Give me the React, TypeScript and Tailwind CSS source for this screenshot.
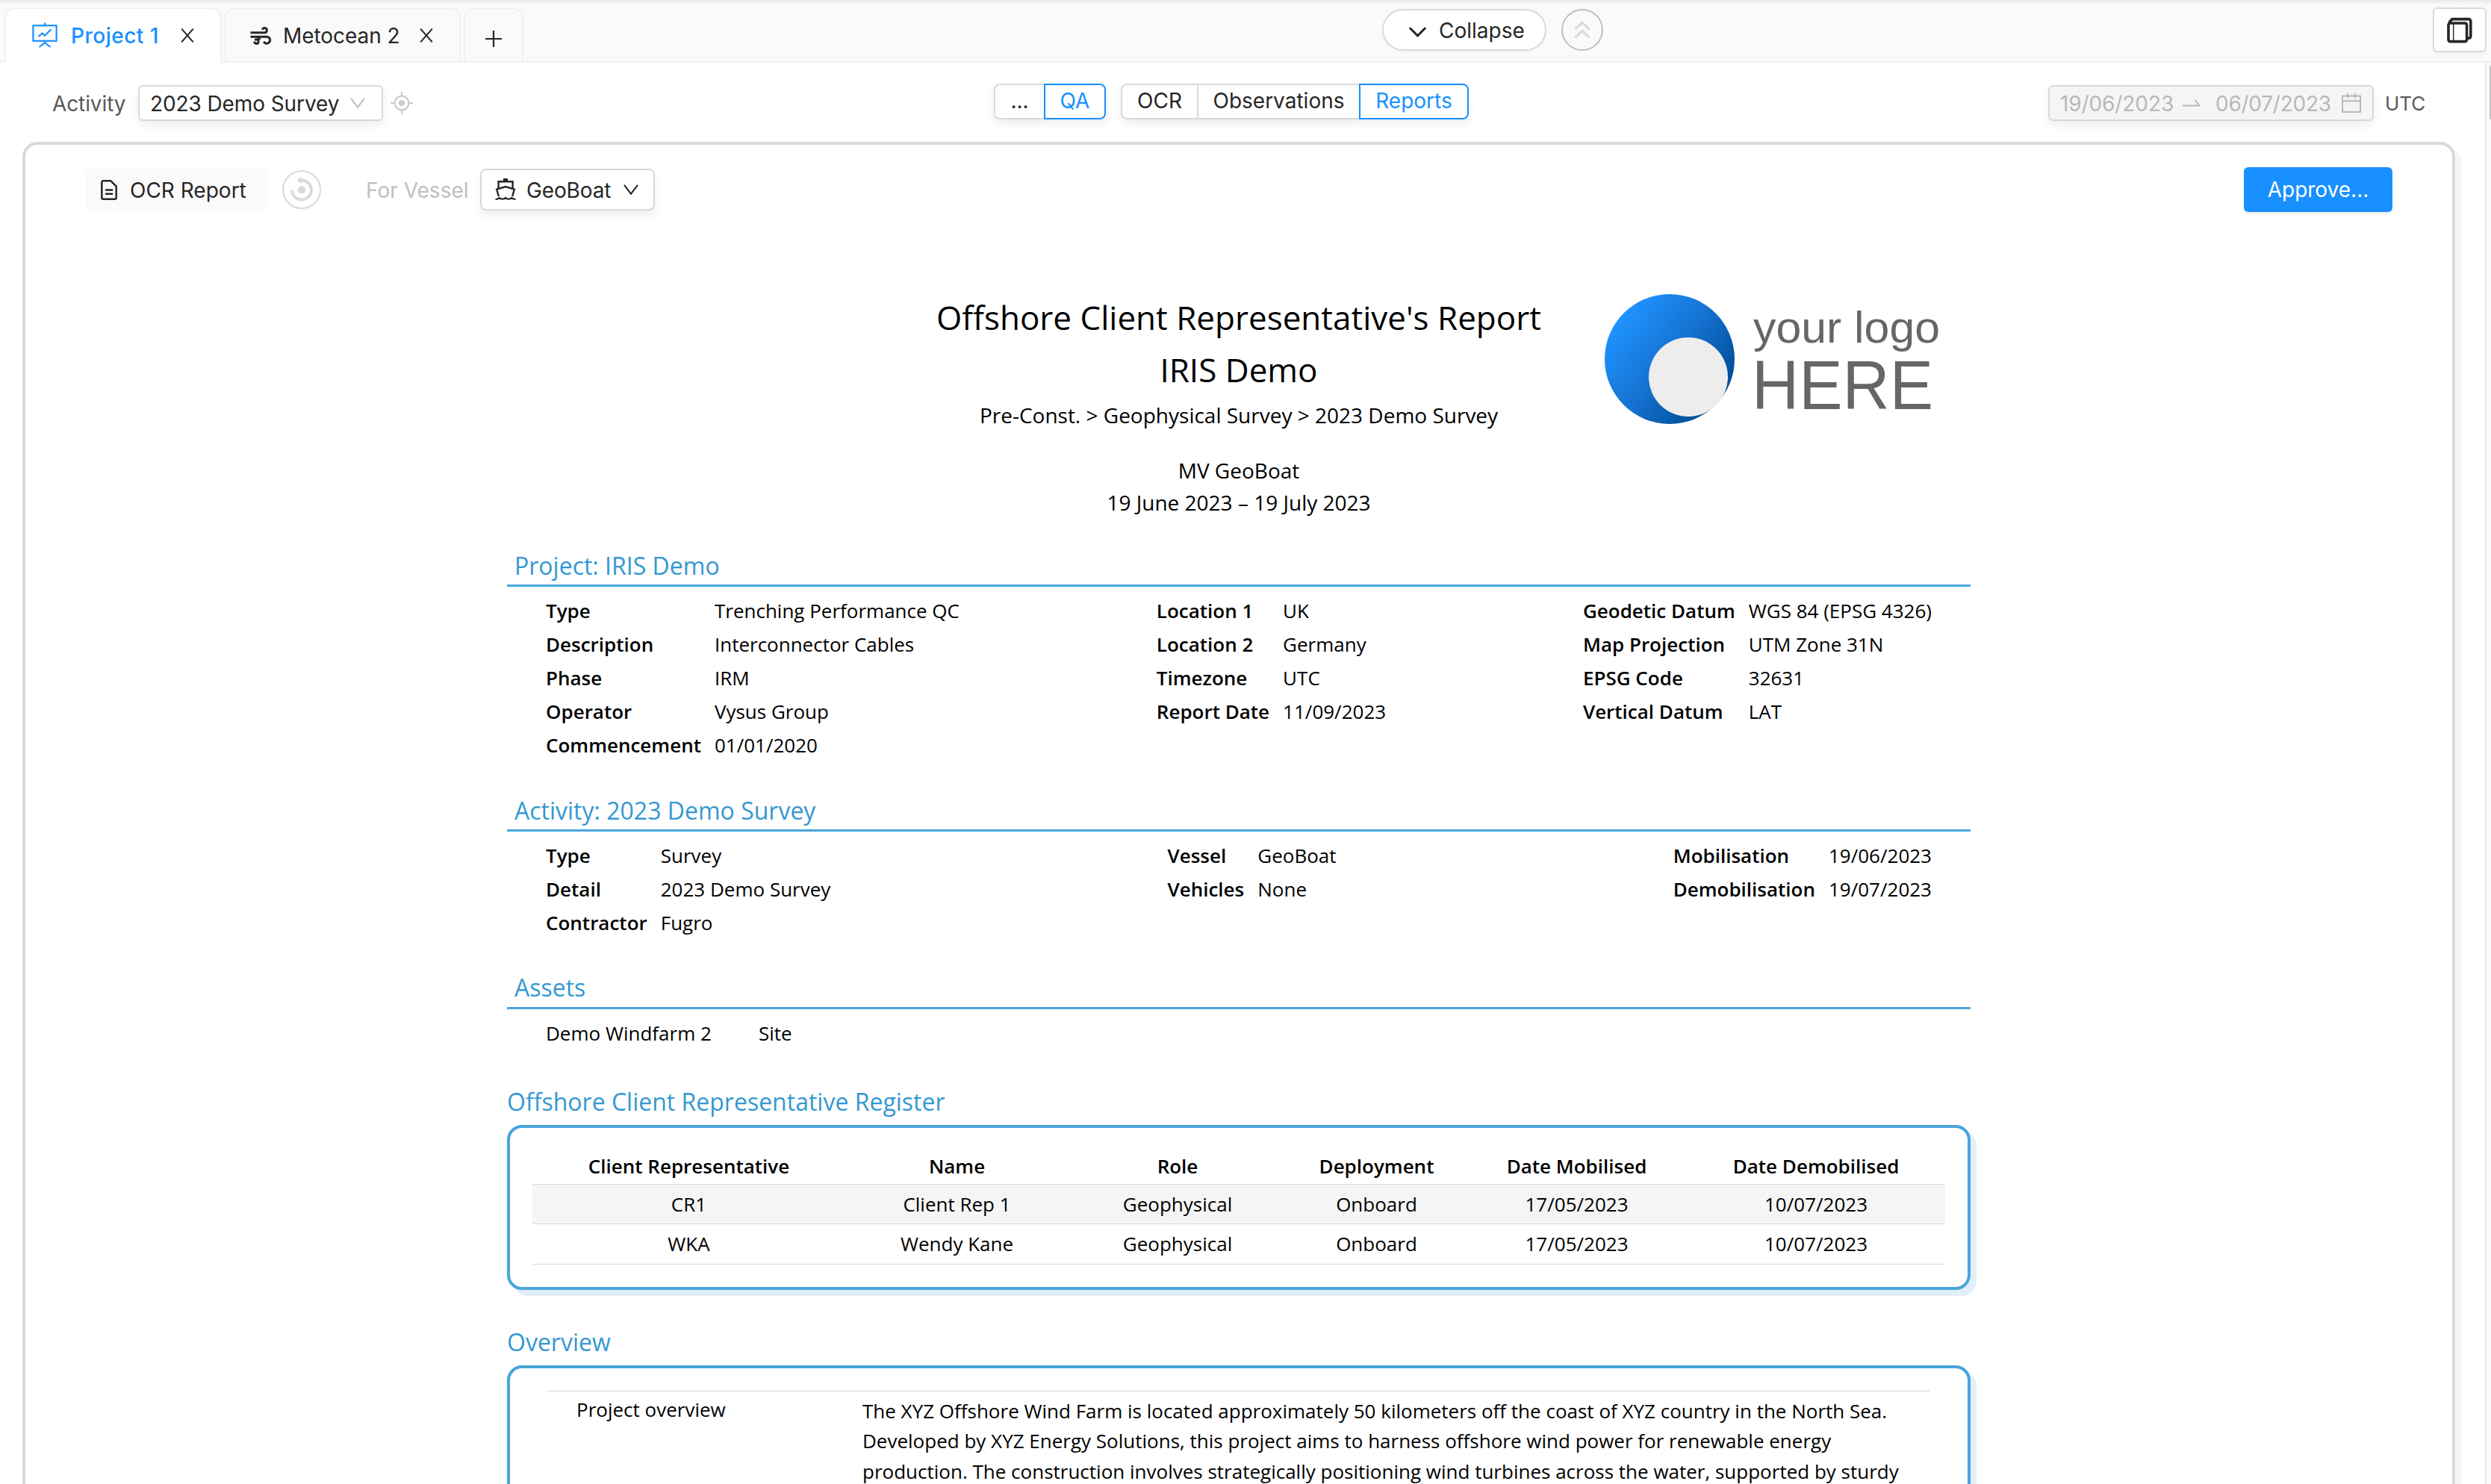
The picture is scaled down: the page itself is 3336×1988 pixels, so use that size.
// OCR report page - tab bar, activity toolbar and the printable report
import React from 'react';

type Field = [label: string, value: string];

interface FieldSectionProps {
  title: string;
  columns: Field[][];
}

const projectColumns: Field[][] = [
  [
    ['Type', 'Trenching Performance QC'],
    ['Description', 'Interconnector Cables'],
    ['Phase', 'IRM'],
    ['Operator', 'Vysus Group'],
    ['Commencement', '01/01/2020'],
  ],
  [
    ['Location 1', 'UK'],
    ['Location 2', 'Germany'],
    ['Timezone', 'UTC'],
    ['Report Date', '11/09/2023'],
  ],
  [
    ['Geodetic Datum', 'WGS 84 (EPSG 4326)'],
    ['Map Projection', 'UTM Zone 31N'],
    ['EPSG Code', '32631'],
    ['Vertical Datum', 'LAT'],
  ],
];

const activityColumns: Field[][] = [
  [
    ['Type', 'Survey'],
    ['Detail', '2023 Demo Survey'],
    ['Contractor', 'Fugro'],
  ],
  [
    ['Vessel', 'GeoBoat'],
    ['Vehicles', 'None'],
  ],
  [
    ['Mobilisation', '19/06/2023'],
    ['Demobilisation', '19/07/2023'],
  ],
];

const registerHeaders = [
  'Client Representative',
  'Name',
  'Role',
  'Deployment',
  'Date Mobilised',
  'Date Demobilised',
];

const registerRows = [
  ['CR1', 'Client Rep 1', 'Geophysical', 'Onboard', '17/05/2023', '10/07/2023'],
  ['WKA', 'Wendy Kane', 'Geophysical', 'Onboard', '17/05/2023', '10/07/2023'],
];

// Icons

function ProjectIcon() {
  return (
    <svg width="34" height="34" viewBox="0 0 34 34" fill="none" stroke="currentColor" strokeWidth="2.2">
      <rect x="1.4" y="4.2" width="31.2" height="20.6" />
      <path d="M17 0.5V4.5M17 25v3M9.5 33l7.5-5.8 7.5 5.8" />
      <path d="M8.5 19l5-4.6 3.4 3.4L25.5 9.2" />
    </svg>
  );
}

function WindIcon() {
  return (
    <svg width="29" height="26" viewBox="0 0 29 26" fill="none" stroke="currentColor" strokeWidth="3">
      <path d="M0.5 7.7H19.4a3.1 3.1 0 1 0-3.1-4" />
      <path d="M0.5 13.2H22.4a4.5 4.5 0 1 1-4.2 6.6" />
      <path d="M6 16.9h3a2.9 2.9 0 0 1 0 5.6c-2 0-3.1-1-3.7-2.6M9 13.2a4.6 4.6 0 0 1 3.6 4.2" />
    </svg>
  );
}

function CloseIcon() {
  return (
    <svg width="18" height="19" viewBox="0 0 18 19" fill="none" stroke="currentColor" strokeWidth="2">
      <path d="M1.2 0.6l15.6 17.8M16.8 0.6L1.2 18.4" />
    </svg>
  );
}

function DownIcon() {
  return (
    <svg width="20" height="15" viewBox="0 0 20 15" fill="none" stroke="currentColor" strokeWidth="2.1">
      <path d="M1 0.8l9 12 9-12" />
    </svg>
  );
}

function AimIcon() {
  return (
    <svg width="30" height="30" viewBox="0 0 30 30" fill="none" stroke="currentColor" strokeWidth="2.2">
      <circle cx="15" cy="15" r="9.4" />
      <circle cx="15" cy="15" r="4.2" fill="currentColor" stroke="none" />
      <path d="M15 0v6M15 24v6M0 15h6M24 15h6" />
    </svg>
  );
}

function DocumentIcon() {
  return (
    <svg width="22" height="27" viewBox="0 0 22 27" fill="none" stroke="currentColor" strokeWidth="2.5" strokeLinejoin="round">
      <path d="M3.3 1.3H13.4L20.7 8.6V23.7a2 2 0 0 1-2 2H3.3a2 2 0 0 1-2-2V3.3a2 2 0 0 1 2-2Z" />
      <path d="M6 13.6h10.2M6 18.7h10.2" />
    </svg>
  );
}

function ReloadIcon() {
  return (
    <svg width="32" height="34" viewBox="0 0 32 34" fill="none">
      <path d="M3 18.5a13 13 0 1 0 13-13" stroke="currentColor" strokeWidth="3.8" />
      <path d="M9.6 5.6L15.8 0.6v10Z" fill="currentColor" />
      <circle cx="16" cy="18.3" r="5.1" fill="currentColor" />
    </svg>
  );
}

function BoatIcon() {
  return (
    <svg width="28" height="30" viewBox="0 0 28 30" fill="none" stroke="currentColor" strokeWidth="2.4">
      <path d="M11 0h6v3h-6z" fill="currentColor" stroke="none" />
      <path d="M4.6 13V4.2H23.6V13" />
      <path d="M4.8 24L2.2 14.6 14 11l11.8 3.6L23.2 24" />
      <path d="M0.5 28c3 0 4-.8 5.2-2 2 2.2 6.4 2.2 8.3 0 2 2.2 6.4 2.2 8.3 0 1.2 1.2 2.2 2 5.2 2" strokeWidth="2.1" />
    </svg>
  );
}

function CalendarIcon() {
  return (
    <svg width="26" height="26" viewBox="0 0 26 26" fill="none" stroke="currentColor" strokeWidth="2">
      <rect x="1" y="3.6" width="24" height="21.4" />
      <path d="M1 10.3h24M8 0v6.5M18 0v6.5" />
    </svg>
  );
}

function RangeArrowIcon() {
  return (
    <svg width="25" height="10" viewBox="0 0 25 10" fill="none" stroke="currentColor" strokeWidth="2">
      <path d="M0 8.5h22.5L16.4 0.8" />
    </svg>
  );
}

function WindowsIcon() {
  return (
    <svg width="34" height="35" viewBox="0 0 34 35" fill="none" stroke="currentColor" strokeWidth="3.6">
      <rect x="2" y="8" width="24.6" height="24.6" rx="2.5" />
      <path d="M2.6 7.5L7 2.6H29a2.8 2.8 0 0 1 2.8 2.8V25.5a2.8 2.8 0 0 1-2.8 2.8h-2" />
      <path d="M8.7 8v24" strokeWidth="1.4" />
    </svg>
  );
}

function ClientLogo() {
  return (
    <svg width="460" height="190" viewBox="0 0 460 190" className="ml-[84px] mt-[2px] shrink-0">
      <defs>
        <linearGradient id="logo-ball" x1="0.1" y1="0.2" x2="0.85" y2="0.8">
          <stop offset="0" stopColor="#1f93ff" />
          <stop offset="0.5" stopColor="#1573d2" />
          <stop offset="1" stopColor="#004f97" />
        </linearGradient>
      </defs>
      <circle cx="88" cy="88" r="87" fill="url(#logo-ball)" />
      <circle cx="113" cy="112" r="53" fill="#ededed" />
      <text x="200" y="66" fontSize="60" textLength="250" lengthAdjust="spacingAndGlyphs" fill="#666666" className="font-['Liberation_Sans',sans-serif]">
        your logo
      </text>
      <text x="198" y="155" fontSize="92" textLength="243" lengthAdjust="spacingAndGlyphs" fill="#666666" className="font-['Liberation_Sans',sans-serif]">
        HERE
      </text>
    </svg>
  );
}

// Page chrome

function TabBar() {
  return (
    <header className="flex h-[84px] items-end bg-[linear-gradient(#e8e8e8,#fafafa_6px)] pl-[6px] shadow-[inset_0_-2px_0_#f0f0f0]">
      <div className="flex h-[74px] w-[291px] items-center rounded-t-[14px] border-2 border-[#f0f0f0] border-b-white bg-white pl-[35px]">
        <span className="text-[#1890ff]"><ProjectIcon /></span>
        <span className="ml-[18px] mt-[2px] w-[147px] font-medium tracking-[0.5px] text-[#1890ff]">Project 1</span>
        <CloseIcon />
      </div>
      <div className="ml-[4px] flex h-[74px] w-[316px] items-center rounded-t-[14px] border-2 border-[#f0f0f0] bg-[#fafafa] pl-[32px]">
        <span className="mt-[4px]"><WindIcon /></span>
        <span className="ml-[15px] mt-[2px] w-[183px] tracking-[-0.06px]">Metocean 2</span>
        <CloseIcon />
      </div>
      <div className="ml-[4px] flex h-[74px] w-[80px] items-center justify-center rounded-t-[14px] border-2 border-[#f0f0f0] bg-[#fafafa]">
        <svg width="22" height="22" viewBox="0 0 22 22" stroke="currentColor" strokeWidth="2.2" className="mt-[9px]">
          <path d="M11 0v22M0 11h22" />
        </svg>
      </div>
      <div className="ml-[1150px] mb-[16px] flex h-[56px] w-[220px] items-center rounded-full border-2 border-[#d9d9d9] bg-white pl-[34px] shadow-[0_4px_0_rgba(0,0,0,0.015)]">
        <svg width="23" height="14" viewBox="0 0 23 14" fill="none" stroke="currentColor" strokeWidth="3" strokeLinecap="round" className="mt-[6px]">
          <path d="M1.7 2l9.8 9.8L21.3 2" />
        </svg>
        <span className="ml-[17px] mt-[2px]">Collapse</span>
      </div>
      <div className="ml-[20px] mb-[16px] flex h-[56px] w-[56px] items-center justify-center rounded-full border-2 border-[#bfbfbf] text-[#d9d9d9]">
        <svg width="22" height="24" viewBox="0 0 22 24" fill="none" stroke="currentColor" strokeWidth="3">
          <path d="M1.5 11.5l9.5-9.3 9.5 9.3M1.5 22.5l9.5-9.3 9.5 9.3" />
        </svg>
      </div>
      <div className="ml-auto mr-[6px] mb-[14px] flex h-[60px] w-[72px] items-center justify-center rounded-[6px] border-2 border-[#d9d9d9] bg-white shadow-[0_4px_0_rgba(0,0,0,0.015)]">
        <WindowsIcon />
      </div>
    </header>
  );
}

function Toolbar() {
  return (
    <div className="flex h-[106px] items-start pt-[28px] pl-[70px]">
      <span className="mt-[5px] w-[115px] tracking-[-0.1px] text-[#595959]">Activity</span>
      <div className="mt-[2px] flex h-[48px] w-[328px] items-center rounded-[6px] border-2 border-[#d9d9d9] bg-white pl-[14px] shadow-[0_6px_12px_rgba(0,0,0,0.07)]">
        <span className="mt-[2px] w-[268px] whitespace-nowrap tracking-[-0.1px]">2023 Demo Survey</span>
        <span className="text-[#bfbfbf]"><DownIcon /></span>
      </div>
      <span className="ml-[10px] mt-[11px] text-[#cccccc]"><AimIcon /></span>

      <div className="ml-[778px] flex h-[48px] rounded-[8px] leading-[42px] shadow-[0_6px_12px_rgba(0,0,0,0.07)]">
        <div className="flex w-[67px] justify-center rounded-l-[8px] border-2 border-r-0 border-[#d9d9d9] bg-white">...</div>
        <div className="flex w-[83px] justify-center rounded-r-[8px] border-2 border-[#1890ff] bg-white text-[#1890ff]">QA</div>
      </div>
      <div className="ml-[20px] flex h-[48px] rounded-[8px] leading-[42px] shadow-[0_6px_12px_rgba(0,0,0,0.07)]">
        <div className="flex w-[104px] justify-center rounded-l-[8px] border-2 border-[#d9d9d9] bg-white">OCR</div>
        <div className="flex w-[215px] justify-center border-y-2 border-[#d9d9d9] bg-white">Observations</div>
        <div className="flex w-[147px] justify-center rounded-r-[8px] border-2 border-[#1890ff] bg-white text-[#1890ff]">Reports</div>
      </div>

      <div className="ml-auto mt-[2px] flex h-[48px] w-[436px] items-center rounded-[6px] border-2 border-[#d9d9d9] bg-[#f5f5f5] pl-[14px] text-[#b8b8b8] shadow-[0_6px_12px_rgba(0,0,0,0.07)]">
        <span className="mt-[2px] w-[164px] tracking-[-0.1px]">19/06/2023</span>
        <RangeArrowIcon />
        <span className="ml-[19px] mt-[2px] w-[169px] tracking-[-0.25px]">06/07/2023</span>
        <CalendarIcon />
      </div>
      <span className="ml-[15px] mr-[76px] mt-[5px] w-[58px] text-[26px] leading-[44px] text-[#595959]">UTC</span>
    </div>
  );
}

function ReportActions() {
  return (
    <div className="flex h-[60px] items-center pl-[80px] pr-[80px]">
      <div className="flex h-[56px] w-[244px] items-center rounded-[8px] bg-[#fafafa] pl-[21px]">
        <DocumentIcon />
        <span className="ml-[17px] mt-[2px]">OCR Report</span>
      </div>
      <div className="ml-[20px] flex h-[52px] w-[52px] items-center justify-center rounded-full border-2 border-[#d9d9d9] text-[#d9d9d9] shadow-[0_4px_0_rgba(0,0,0,0.015)]">
        <span className="-mt-[2px]"><ReloadIcon /></span>
      </div>
      <span className="ml-[60px] mt-[2px] w-[153px] text-[#bfbfbf]">For Vessel</span>
      <div className="flex h-[56px] w-[234px] items-center rounded-[8px] border-2 border-[#d9d9d9] bg-white pl-[18px] shadow-[0_6px_12px_rgba(0,0,0,0.07)]">
        <BoatIcon />
        <span className="ml-[14px] mt-[2px] w-[130px] tracking-[-0.15px]">GeoBoat</span>
        <DownIcon />
      </div>
      <button className="ml-auto h-[60px] w-[199px] rounded-[6px] bg-[#1890ff] pb-[1px] text-white shadow-[0_4px_0_rgba(0,0,0,0.04)]">
        Approve...
      </button>
    </div>
  );
}

// Report body

function SectionTitle({ title }: { title: string }) {
  return (
    <h2 className="border-b-[3px] border-[#4aa5d9] pl-[10px] text-[32px] leading-[50.3px] text-[#3498d2]">{title}</h2>
  );
}

function FieldSection({ title, columns }: FieldSectionProps) {
  return (
    <section className="mb-[40px]">
      <SectionTitle title={title} />
      <div className="flex justify-between px-[52px] pt-[10px]">
        {columns.map((fields, i) => (
          <dl key={i} className="grid auto-rows-[44.86px] grid-cols-[auto_auto] content-start gap-x-[18px] leading-[44.86px]">
            {fields.map(([label, value]) => (
              <React.Fragment key={label}>
                <dt className="font-semibold">{label}</dt>
                <dd>{value}</dd>
              </React.Fragment>
            ))}
          </dl>
        ))}
      </div>
    </section>
  );
}

function RegisterTable() {
  return (
    <section>
      <h2 className="text-[32px] leading-[50px] text-[#3498d2]">Offshore Client Representative Register</h2>
      <div className="mt-[6px] h-[221px] rounded-[20px] border-4 border-[#4aa5d9] bg-white px-[30px] pt-[27px] shadow-[8px_8px_0_#e1eff9]">
        <div className="grid h-[49px] grid-cols-[419px_299px_292px_241px_295px_346px] border-b border-[#d9d9d9] text-center font-semibold leading-[49px]">
          {registerHeaders.map(header => <div key={header}>{header}</div>)}
        </div>
        {registerRows.map((row, i) => (
          <div
            key={row[0]}
            className={`grid h-[53.5px] grid-cols-[419px_299px_292px_241px_295px_346px] border-b border-[#d9d9d9] text-center leading-[53px] ${
              i % 2 === 0 ? 'bg-[#f5f5f5]' : 'bg-white'
            }`}
          >
            {row.map((cell, j) => <div key={j}>{cell}</div>)}
          </div>
        ))}
      </div>
    </section>
  );
}

function Overview() {
  return (
    <section className="mt-[45px]">
      <h2 className="text-[32px] leading-[50px] text-[#3498d2]">Overview</h2>
      <div className="mt-[6px] h-[400px] rounded-[20px] border-4 border-[#4aa5d9] bg-white px-[50px] pt-[30px] shadow-[8px_8px_0_#e1eff9]">
        <div className="flex border-t border-[#d9d9d9] pl-[39px] leading-[40.86px]">
          <div className="w-[383px] pt-[4px]">Project overview</div>
          <p className="whitespace-nowrap pt-[6px]">
            The XYZ Offshore Wind Farm is located approximately 50 kilometers off the coast of XYZ country in the North Sea.<br />
            Developed by XYZ Energy Solutions, this project aims to harness offshore wind power for renewable energy<br />
            production. The construction involves strategically positioning wind turbines across the water, supported by sturdy
          </p>
        </div>
      </div>
    </section>
  );
}

function Report() {
  return (
    <article className="mx-auto mt-[107px] w-[1960px] font-['Open_Sans',sans-serif] text-[26px] text-black">
      <div className="mb-[38px] grid grid-cols-[1fr_auto_1fr]">
        <div />
        <div className="flex flex-col items-center whitespace-nowrap text-[28px] leading-[44px]">
          <h1 className="text-[44px] leading-[69px]">Offshore Client Representative's Report</h1>
          <div className="text-[44px] leading-[70px]">IRIS Demo</div>
          <div className="mt-[4px]">Pre-Const. &gt; Geophysical Survey &gt; 2023 Demo Survey</div>
          <div className="mt-[30px]">MV GeoBoat</div>
          <div className="leading-[43px]">19 June 2023 – 19 July 2023</div>
        </div>
        <ClientLogo />
      </div>

      <FieldSection title="Project: IRIS Demo" columns={projectColumns} />
      <FieldSection title="Activity: 2023 Demo Survey" columns={activityColumns} />

      <section className="mb-[44px]">
        <SectionTitle title="Assets" />
        <div className="flex px-[52px] pt-[10px] leading-[44.86px]">
          <span className="w-[285px]">Demo Windfarm 2</span>
          <span>Site</span>
        </div>
      </section>

      <RegisterTable />
      <Overview />
    </article>
  );
}

export default function App() {
  return (
    <div className="flex h-[1988px] w-[3336px] flex-col overflow-hidden bg-white font-['Inter',sans-serif] text-[28px] leading-[44px] text-[#262626]">
      <TabBar />
      <div className="flex min-h-0 flex-1">
        <main className="w-[3328px] shrink-0">
          <Toolbar />
          <div className="ml-[30px] h-[2000px] w-[3258px] rounded-[20px] border-4 border-[#d9d9d9] bg-white pt-[30px] shadow-[8px_8px_0_#f5f5f5]">
            <ReportActions />
            <Report />
          </div>
        </main>
        {/* Scrollbar gutter */}
        <div className="w-[8px] border-l-2 border-[#e8e8e8] bg-[#fafafa] pl-[4px] pt-[4px]">
          <div className="h-[72px] rounded-l-[4px] bg-[#c1c1c1]" />
        </div>
      </div>
    </div>
  );
}
